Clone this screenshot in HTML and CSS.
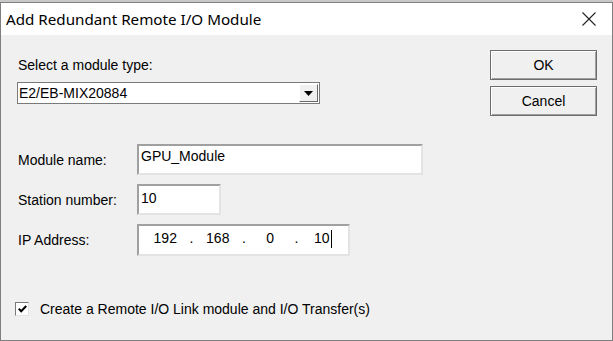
FILE: index.html
```html
<!DOCTYPE html>
<html>
<head>
    <title>Add Redundant Remote I/O Module</title>
    <link rel="stylesheet" href="styles.css">
</head>
<body>
  <div class="window">
    <div class="titlebar">
      <span class="caption">Add Redundant Remote I/O Module</span>
      <svg class="close" width="14" height="14" viewBox="0 0 14 14">
        <path d="M0.5 0.5 L13.5 13.5 M13.5 0.5 L0.5 13.5" stroke="#222" stroke-width="1.1" fill="none"/>
      </svg>
    </div>

    <div class="content">
      <div class="main">
        <div class="form">
          <label class="type-label">Select a module type:</label>
          <div class="combo">
            <span class="combo-value">E2/EB-MIX20884</span>
            <span class="combo-button">
              <svg width="9" height="5" viewBox="0 0 9 5"><path d="M0 0 H9 L4.5 5 Z" fill="#000"/></svg>
            </span>
          </div>

          <div class="fields">
            <div class="row">
              <label>Module name:</label>
              <div class="edit edit-name">GPU_Module</div>
            </div>
            <div class="row">
              <label>Station number:</label>
              <div class="edit edit-station">10</div>
            </div>
            <div class="row">
              <label>IP Address:</label>
              <div class="edit edit-ip">
                <span class="octet">192</span><span class="dot">.</span><span class="octet">168</span><span class="dot">.</span><span class="octet">0</span><span class="dot">.</span><span class="octet">10<span class="caret"></span></span>
              </div>
            </div>
          </div>
        </div>

        <div class="buttons">
          <button class="btn default">OK</button>
          <button class="btn">Cancel</button>
        </div>
      </div>

      <div class="check-row">
        <span class="checkbox">
          <svg width="9" height="8" viewBox="0 0 9 8"><path d="M0.8 3.8 L3.2 6.3 L8.2 1" stroke="#000" stroke-width="2" fill="none"/></svg>
        </span>
        <span>Create a Remote I/O Link module and I/O Transfer(s)</span>
      </div>
    </div>
  </div>
</body>
</html>
```

FILE: styles.css
```css
body {
  margin: 0;
  padding: 0;
  background-color: #c8c8c8;
  font-family: "Liberation Sans", Arial, sans-serif;
  font-size: 14px;
  color: #000;
}

.window {
  margin-top: 2px;
  height: 337px;
  width: 611px;
  border: 1px solid #7f7f7f;
  background-color: #f0f0f0;
  display: flex;
  flex-direction: column;
}

.titlebar {
  height: 32px;
  background-color: #fff;
  display: flex;
  align-items: center;
  justify-content: space-between;
  padding: 0 16px 0 5px;
}

.caption {
  font-family: "Noto Sans", sans-serif;
  font-size: 15.2px;
  color: #000;
}

.close {
  margin-top: -1px;
}

.content {
  flex: 1;
  display: flex;
  flex-direction: column;
}

.main {
  display: flex;
  justify-content: space-between;
}

.form {
  padding: 22px 0 0 16px;
}

.type-label {
  display: block;
  padding-left: 1px;
  line-height: 16px;
}

.combo {
  margin-top: 9px;
  width: 301px;
  height: 20px;
  background-color: #fff;
  border: 1px solid #7a7a7a;
  display: flex;
  align-items: center;
  justify-content: space-between;
}

.combo-value {
  padding-left: 1px;
}

.combo-button {
  width: 17px;
  height: 16px;
  margin-right: 1px;
  background-color: #f0f0f0;
  border: 1px solid;
  border-color: #fff #696969 #696969 #fff;
  display: flex;
  align-items: center;
  justify-content: center;
}

.fields {
  margin-top: 40px;
  display: flex;
  flex-direction: column;
  gap: 9px;
}

.row {
  display: flex;
  align-items: center;
}

.row label {
  width: 119px;
  padding-left: 1px;
}

.edit {
  height: 25px;
  background-color: #fff;
  border: 2px solid;
  border-color: #a0a0a0 #e3e3e3 #e3e3e3 #a0a0a0;
  display: flex;
  align-items: flex-start;
  padding: 2px 0 0 2px;
  line-height: 16px;
}

.edit-name {
  width: 280px;
}

.edit-station {
  width: 78px;
  padding-top: 4px;
  height: 23px;
}

.edit-ip {
  width: 207px;
  height: 24px;
  padding: 4px 0 0 2px;
}

.octet {
  width: 48.5px;
  text-align: center;
  white-space: nowrap;
}

.dot {
  width: 4px;
  text-align: center;
}

.caret {
  display: inline-block;
  width: 1px;
  height: 18px;
  margin-left: 1px;
  background-color: #000;
  vertical-align: -5px;
}

.buttons {
  padding: 15px 15px 0 0;
  display: flex;
  flex-direction: column;
  gap: 6px;
}

.btn {
  width: 107px;
  height: 30px;
  font-family: "Liberation Sans", Arial, sans-serif;
  font-size: 14px;
  color: #000;
  background-color: #f0f0f0;
  border: 1px solid #6d6d6d;
  box-shadow: inset 1px 1px #fff, inset -1px -1px #a0a0a0;
  padding: 0;
}

.check-row {
  margin-top: auto;
  margin-bottom: 23px;
  padding-left: 14px;
  display: flex;
  align-items: center;
  gap: 11px;
}

.checkbox {
  width: 12px;
  height: 12px;
  background-color: #fff;
  border: 1px solid;
  border-color: #7a7a7a #e3e3e3 #e3e3e3 #7a7a7a;
  display: flex;
  align-items: center;
  justify-content: center;
}
```
